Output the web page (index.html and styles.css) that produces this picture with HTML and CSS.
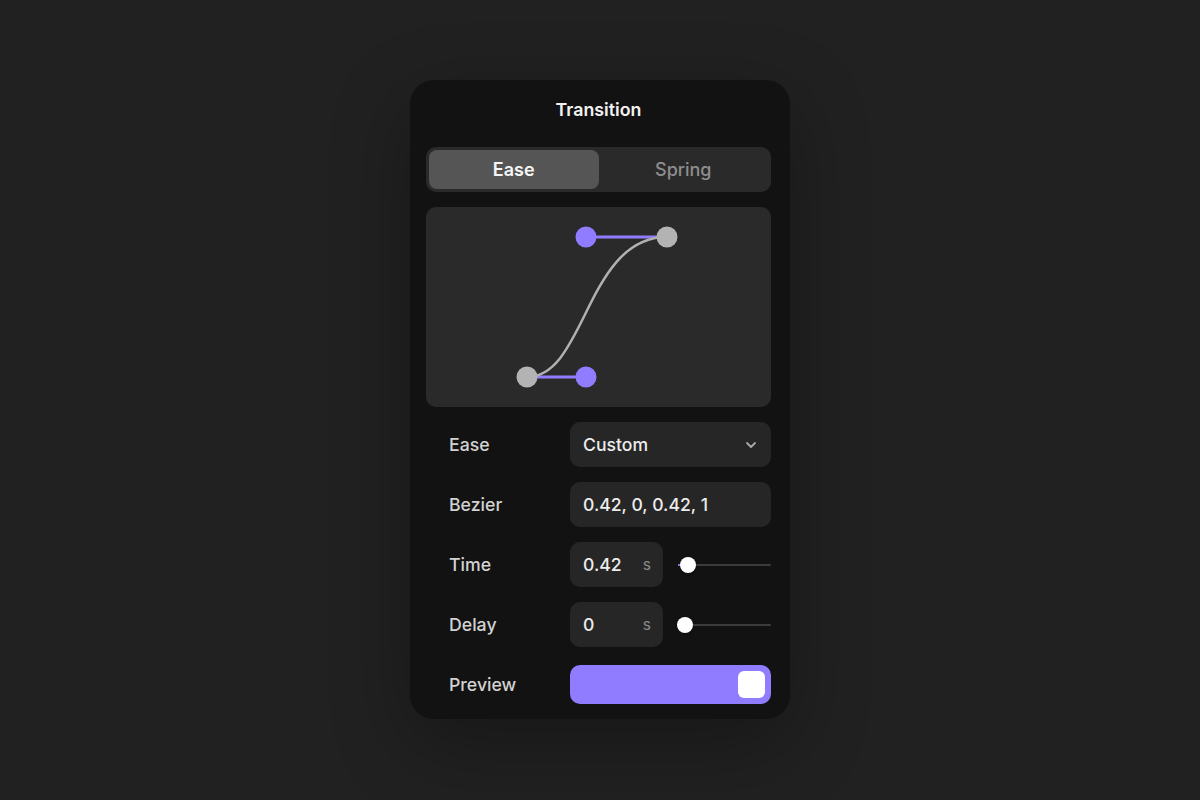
FILE: index.html
```html
<!DOCTYPE html>
<html>
<head>
<meta charset="utf-8">
<link rel="stylesheet" href="styles.css">
</head>
<body>
<div class="stage">
  <div class="panel">
    <div class="title">Transition</div>
    <div class="segmented">
      <div class="seg active">Ease</div>
      <div class="seg">Spring</div>
    </div>
    <div class="curve">
      <svg width="344" height="200" viewBox="0 0 344 200">
        <line x1="101" y1="170" x2="160" y2="170" stroke="#8f7cff" stroke-width="3"/>
        <line x1="160" y1="30" x2="241" y2="30" stroke="#8f7cff" stroke-width="3"/>
        <path d="M101 170 C160 170 160 30 241 30" fill="none" stroke="#b0b0b0" stroke-width="2.5"/>
        <circle cx="160" cy="30" r="10.5" fill="#8f7cff"/>
        <circle cx="160" cy="170" r="10.5" fill="#8f7cff"/>
        <circle cx="101" cy="170" r="10.5" fill="#b3b3b3"/>
        <circle cx="241" cy="30" r="10.5" fill="#b3b3b3"/>
      </svg>
    </div>
    <div class="rows">
      <div class="row">
        <div class="label">Ease</div>
        <div class="field select">
          <span>Custom</span>
          <svg class="chev" width="12" height="8" viewBox="0 0 12 8"><path d="M2 2 L6 6 L10 2" fill="none" stroke="#a8a8a8" stroke-width="1.8" stroke-linecap="round" stroke-linejoin="round"/></svg>
        </div>
      </div>
      <div class="row">
        <div class="label">Bezier</div>
        <div class="field"><span>0.42, 0, 0.42, 1</span></div>
      </div>
      <div class="row">
        <div class="label">Time</div>
        <div class="field small"><span>0.42</span><span class="unit">s</span></div>
        <div class="slider">
          <div class="fill" style="width:10px"></div>
          <div class="thumb" style="left:10px"></div>
        </div>
      </div>
      <div class="row">
        <div class="label">Delay</div>
        <div class="field small"><span>0</span><span class="unit">s</span></div>
        <div class="slider">
          <div class="thumb" style="left:7px"></div>
        </div>
      </div>
      <div class="row">
        <div class="label">Preview</div>
        <div class="preview"><div class="knob"></div></div>
      </div>
    </div>
  </div>
</div>
</body>
</html>
```

FILE: styles.css
```css
* { box-sizing: border-box; }
html, body { margin: 0; padding: 0; }
body {
  background: #212121;
  font-family: Inter, "Noto Sans", sans-serif;
  width: 1200px;
  height: 800px;
  overflow: hidden;
}
.stage {
  display: flex;
  justify-content: center;
  padding-top: 80px;
}
.panel {
  width: 380px;
  height: 639px;
  background: #121212;
  border-radius: 24px;
  padding: 16px 19px 12px 16px;
  box-shadow: 0 24px 80px rgba(0,0,0,0.3);
  display: flex;
  flex-direction: column;
}
.title {
  height: 28px;
  line-height: 28px;
  text-align: center;
  color: #f2f2f2;
  font-size: 17.8px;
  font-weight: 600;
  margin-bottom: 23px;
}
.segmented {
  height: 45px;
  background: #2a2a2a;
  border-radius: 10px;
  padding: 3px;
  display: flex;
}
.seg {
  flex: 1;
  display: flex;
  align-items: center;
  justify-content: center;
  color: #8e8e8e;
  font-size: 18px;
  font-weight: 500;
  border-radius: 8px;
}
.seg.active {
  background: #555555;
  color: #f5f5f5;
  font-weight: 600;
}
.curve {
  margin-top: 15px;
  height: 200px;
  background: #2a2a2a;
  border-radius: 10px;
  overflow: hidden;
}
.curve svg { display: block; }
.rows {
  margin-top: 15px;
  padding-left: 23px;
  display: flex;
  flex-direction: column;
  gap: 15px;
}
.row {
  height: 45px;
  display: flex;
  align-items: center;
}
.label {
  width: 121px;
  color: #d2d2d2;
  font-size: 17.7px;
  font-weight: 500;
}
.field {
  flex: 1;
  height: 45px;
  background: #262626;
  border-radius: 10px;
  display: flex;
  align-items: center;
  justify-content: space-between;
  padding: 0 14px 0 13px;
  color: #ececec;
  font-size: 17.6px;
  font-weight: 500;
}
.field.small {
  flex: 0 0 93px;
  padding-right: 12px;
}
.unit {
  color: #8a8a8a;
  font-size: 15.5px;
  font-weight: 400;
}
.chev { display: block; }
.slider {
  flex: 1;
  margin-left: 15px;
  height: 2px;
  background: #3c3c3c;
  border-radius: 1px;
  position: relative;
}
.fill {
  position: absolute;
  left: 0;
  top: 0;
  height: 2px;
  background: #8f7cff;
}
.thumb {
  position: absolute;
  top: 50%;
  width: 16px;
  height: 16px;
  margin-left: -8px;
  margin-top: -8px;
  border-radius: 50%;
  background: #ffffff;
  box-shadow: 0 1px 3px rgba(0,0,0,0.4);
}
.preview {
  flex: 1;
  height: 39px;
  background: #8f7cff;
  border-radius: 10px;
  display: flex;
  align-items: center;
  justify-content: flex-end;
  padding-right: 6px;
}
.knob {
  width: 27px;
  height: 27px;
  background: #ffffff;
  border-radius: 6px;
}
```
